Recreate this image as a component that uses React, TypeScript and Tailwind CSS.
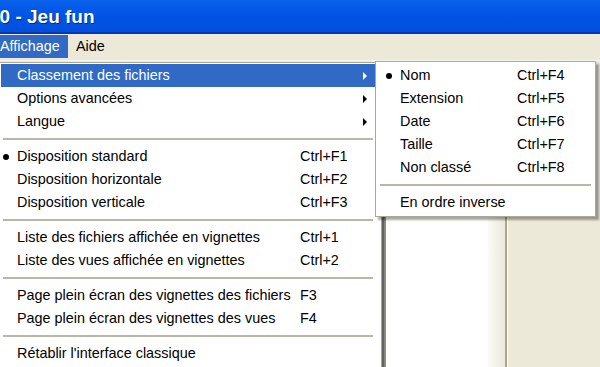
import React from "react";

const font = { fontFamily: '"Liberation Sans", Arial, sans-serif' };

function Arrow({ white }: { white?: boolean }) {
  return (
    <svg width="5" height="8" viewBox="0 0 5 8" className="absolute right-[7px] top-[8px]">
      <path d="M0 0 L4 4 L0 8 Z" fill={white ? "#ffffff" : "#000000"} />
    </svg>
  );
}

type Item = { label: string; shortcut?: string; sub?: boolean; bullet?: boolean; active?: boolean } | "sep";

const mainItems: Item[] = [
  { label: "Classement des fichiers", sub: true, active: true },
  { label: "Options avancées", sub: true },
  { label: "Langue", sub: true },
  "sep",
  { label: "Disposition standard", shortcut: "Ctrl+F1", bullet: true },
  { label: "Disposition horizontale", shortcut: "Ctrl+F2" },
  { label: "Disposition verticale", shortcut: "Ctrl+F3" },
  "sep",
  { label: "Liste des fichiers affichée en vignettes", shortcut: "Ctrl+1" },
  { label: "Liste des vues affichée en vignettes", shortcut: "Ctrl+2" },
  "sep",
  { label: "Page plein écran des vignettes des fichiers", shortcut: "F3" },
  { label: "Page plein écran des vignettes des vues", shortcut: "F4" },
  "sep",
  { label: "Rétablir l'interface classique" },
];

const subItems: Item[] = [
  { label: "Nom", shortcut: "Ctrl+F4", bullet: true },
  { label: "Extension", shortcut: "Ctrl+F5" },
  { label: "Date", shortcut: "Ctrl+F6" },
  { label: "Taille", shortcut: "Ctrl+F7" },
  { label: "Non classé", shortcut: "Ctrl+F8" },
  "sep",
  { label: "En ordre inverse" },
];

function MenuList({ items, textX, shortcutX, bulletX }: { items: Item[]; textX: number; shortcutX: number; bulletX: number }) {
  return (
    <>
      {items.map((it, i) =>
        it === "sep" ? (
          <div key={i} className="h-[12px] flex items-center px-[2px]">
            <div className="w-full h-[2px] bg-[#b9b6aa]" />
          </div>
        ) : (
          <div
            key={i}
            className={`relative h-[23px] text-[14.4px] leading-[23px] ${it.active ? "bg-[#316ac5] text-white" : "text-black"}`}
          >
            {it.bullet && (
              <span
                className={`absolute top-[9px] w-[6px] h-[6px] rounded-full ${it.active ? "bg-white" : "bg-black"}`}
                style={{ left: bulletX }}
              />
            )}
            <span className="absolute whitespace-nowrap" style={{ left: textX }}>{it.label}</span>
            {it.shortcut && (
              <span className="absolute whitespace-nowrap" style={{ left: shortcutX }}>{it.shortcut}</span>
            )}
            {it.sub && <Arrow white={it.active} />}
          </div>
        )
      )}
    </>
  );
}

export default function App() {
  return (
    <div className="relative w-[600px] h-[367px] overflow-hidden bg-[#ece9d8] flex flex-col" style={font}>
      <div className="h-[34px] shrink-0 bg-gradient-to-b from-[#0a61ec] via-[#0054e3] to-[#0050dd] border-b-[2px] border-[#0037b5] flex items-center pt-[3px]">
        <span className="ml-[-11px] text-white font-bold text-[19px] whitespace-nowrap [text-shadow:1px_1px_0_#0a2a80]">80 - Jeu fun</span>
      </div>
      <div className="h-[27px] shrink-0 flex items-stretch text-[14.4px] pt-[1px] pb-[2px] border-b border-[#f6f4ec]">
        <div className="bg-[#316ac5] text-white px-[3px] flex items-center w-[71px] ml-[-3px]">Affichage</div>
        <div className="px-[8px] flex items-center">Aide</div>
      </div>
      <div className="flex-1 flex">
        <div className="w-[382px] shrink-0" />
        <div className="w-[4px] bg-[#8f8d84]" />
        <div className="w-[102px] bg-white" />
        <div className="w-[17px] bg-gradient-to-r from-[#fbfaf6] to-[#ece9d8]" />
        <div className="w-[2px] bg-[#a8a597]" />
        <div className="flex-1 bg-[#ece9d8] border-l border-white" />
      </div>

      {/* main menu */}
      <div className="absolute left-[-4px] top-[62px] w-[386px] h-[320px] bg-white border border-[#aca899] py-[1px] pl-[4px] pr-[2px] shadow-[2px_2px_1px_rgba(0,0,0,0.3)]">
        <div className="w-[374px]">
          <MenuList items={mainItems} textX={16} shortcutX={299} bulletX={2} />
        </div>
      </div>

      {/* submenu */}
      <div className="absolute left-[375px] top-[61px] w-[221px] h-[156px] bg-white border border-[#aca899] p-[2px] shadow-[3px_3px_2px_rgba(0,0,0,0.35)]">
        <MenuList items={subItems} textX={22} shortcutX={139} bulletX={8} />
      </div>
    </div>
  );
}
